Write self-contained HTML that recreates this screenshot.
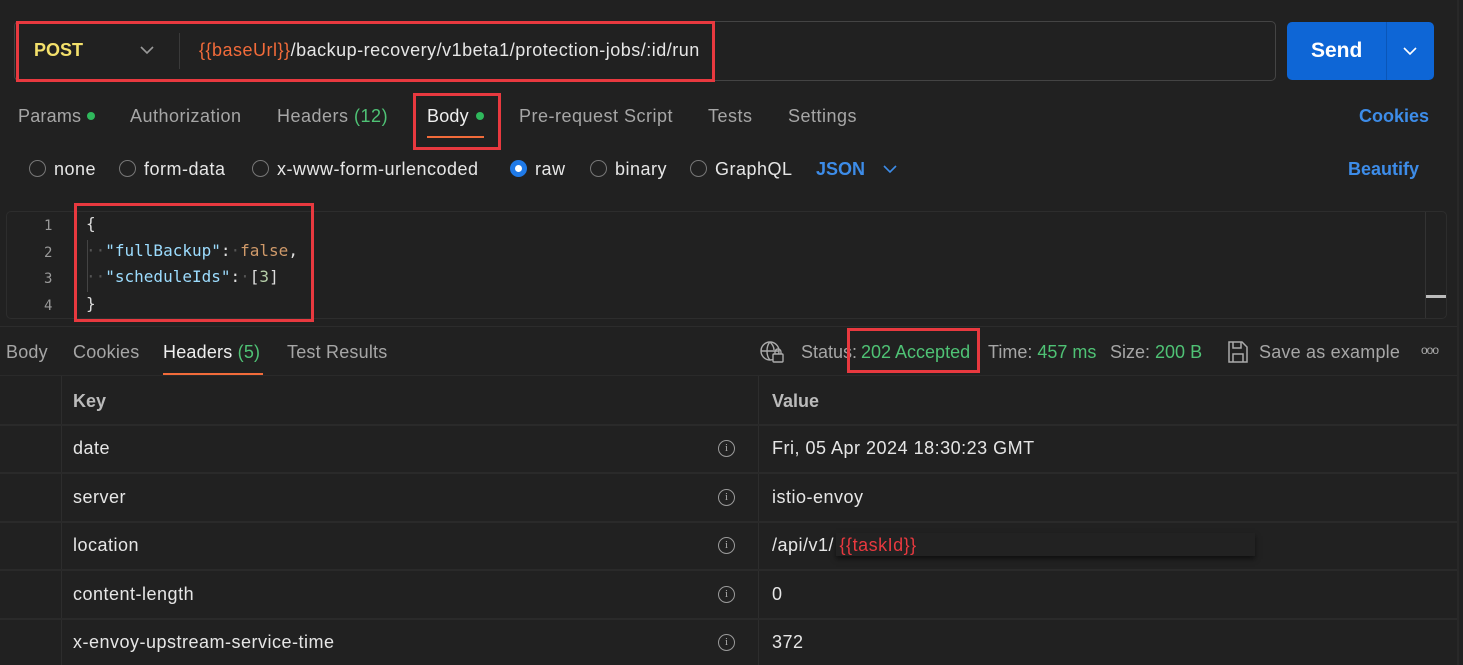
<!DOCTYPE html>
<html><head><meta charset="utf-8"><style>
*{margin:0;padding:0;box-sizing:border-box}
body{width:1463px;height:665px;background:#212121;font-family:"Liberation Sans",sans-serif;color:#e6e6e6;position:relative;overflow:hidden;font-size:18px;letter-spacing:.5px}
.a{position:absolute;white-space:nowrap}
.red{position:absolute;border:3px solid #e8393f}
.g{color:#4fc275}
.mut{color:#a6a6a6}
.radio{position:absolute;width:17px;height:17px;border:1.5px solid #777;border-radius:50%}
.hl{position:absolute;left:0;width:1457px;height:2px;background:#2a2a2a}
.info{position:absolute;left:718px;width:17px;height:17px;border:1.3px solid #9a9a9a;border-radius:50%;font-size:11px;color:#aaa;text-align:center;line-height:15px;font-family:"Liberation Serif",serif;letter-spacing:0}
.mono{font-family:"DejaVu Sans Mono","Liberation Mono",monospace;font-size:16px;letter-spacing:0}
</style></head><body>
<div class="a" style="left:14px;top:21px;width:1262px;height:60px;border:1px solid #444;border-radius:5px"></div>
<div class="a" style="left:179px;top:33px;width:1px;height:36px;background:#3a3a3a"></div>
<div class="a" style="left:34px;top:40px;font-weight:bold;color:#f3e06b;font-size:18px;letter-spacing:0">POST</div>
<svg class="a" style="left:140px;top:45px" width="14" height="10"><path d="M1 2 L7 8 L13 2" stroke="#999" stroke-width="1.6" fill="none"/></svg>
<div class="a" style="left:199px;top:40px"><span style="color:#f26b3a">{{baseUrl}}</span>/backup-recovery/v1beta1/protection-jobs/:id/run</div>
<div class="red" style="left:16px;top:21px;width:699px;height:61px"></div>
<div class="a" style="left:1287px;top:22px;width:147px;height:58px;background:#0e66d6;border-radius:5px"></div>
<div class="a" style="left:1386px;top:22px;width:1px;height:58px;background:#0a56b8"></div>
<div class="a" style="left:1311px;top:39px;font-weight:bold;font-size:21px;color:#fff;letter-spacing:0">Send</div>
<svg class="a" style="left:1403px;top:46px" width="14" height="10"><path d="M1 2 L7 8 L13 2" stroke="#fff" stroke-width="1.6" fill="none"/></svg>
<div class="a mut" style="left:18px;top:106px;letter-spacing:.2px">Params</div>
<div class="a" style="left:87px;top:112px;width:8px;height:8px;border-radius:50%;background:#2fb85c"></div>
<div class="a mut" style="left:130px;top:106px">Authorization</div>
<div class="a mut" style="left:277px;top:106px">Headers <span class="g">(12)</span></div>
<div class="a" style="left:427px;top:106px;color:#eee;letter-spacing:.2px">Body</div>
<div class="a" style="left:476px;top:112px;width:8px;height:8px;border-radius:50%;background:#2fb85c"></div>
<div class="a" style="left:427px;top:136px;width:57px;height:2px;background:#f26b3a"></div>
<div class="red" style="left:413px;top:93px;width:88px;height:57px"></div>
<div class="a mut" style="left:519px;top:106px">Pre-request Script</div>
<div class="a mut" style="left:708px;top:106px">Tests</div>
<div class="a mut" style="left:788px;top:106px">Settings</div>
<div class="a" style="left:1359px;top:106px;color:#3d8ce8;font-weight:bold;letter-spacing:0">Cookies</div>
<div class="radio" style="left:29px;top:160px"></div><div class="a" style="left:54px;top:159px">none</div>
<div class="radio" style="left:119px;top:160px"></div><div class="a" style="left:144px;top:159px">form-data</div>
<div class="radio" style="left:252px;top:160px"></div><div class="a" style="left:277px;top:159px">x-www-form-urlencoded</div>
<div class="radio" style="left:510px;top:160px;border:5px solid #1f7ae8;background:#fff"></div><div class="a" style="left:535px;top:159px">raw</div>
<div class="radio" style="left:590px;top:160px"></div><div class="a" style="left:615px;top:159px">binary</div>
<div class="radio" style="left:690px;top:160px"></div><div class="a" style="left:715px;top:159px">GraphQL</div>
<div class="a" style="left:816px;top:159px;color:#3d8ce8;font-weight:bold;letter-spacing:0">JSON</div>
<svg class="a" style="left:883px;top:164px" width="14" height="10"><path d="M1 2 L7 8 L13 2" stroke="#3d8ce8" stroke-width="1.6" fill="none"/></svg>
<div class="a" style="left:1348px;top:159px;color:#3d8ce8;font-weight:bold;letter-spacing:0">Beautify</div>
<div class="a" style="left:6px;top:211px;width:1441px;height:108px;border:1px solid #2d2d2d;border-radius:5px"></div>
<div class="a" style="left:1425px;top:212px;width:1px;height:106px;background:#333"></div>
<div class="a" style="left:1426px;top:295px;width:20px;height:3px;background:#bbb"></div>
<div class="a mono" style="left:44px;top:213px;color:#999;line-height:26.5px;font-size:14px">1<br>2<br>3<br>4</div>
<div class="a" style="left:87px;top:240px;width:1px;height:52px;background:#444"></div>
<div class="a mono" style="left:86px;top:211px;line-height:26.5px;color:#ddd">{<br><span style="color:#555">··</span><span style="color:#9cdcfe">"fullBackup"</span>:<span style="color:#555">·</span><span style="color:#d09a6a">false</span>,<br><span style="color:#555">··</span><span style="color:#9cdcfe">"scheduleIds"</span>:<span style="color:#555">·</span>[<span style="color:#b5cea8">3</span>]<br>}</div>
<div class="red" style="left:74px;top:203px;width:240px;height:119px"></div>
<div class="hl" style="top:326px;height:1px;background:#2c2c2c"></div>
<div class="a mut" style="left:6px;top:342px;letter-spacing:.2px">Body</div>
<div class="a mut" style="left:73px;top:342px;letter-spacing:.2px">Cookies</div>
<div class="a" style="left:163px;top:342px;color:#eee;letter-spacing:.2px">Headers <span class="g">(5)</span></div>
<div class="a" style="left:163px;top:373px;width:100px;height:2px;background:#f26b3a"></div>
<div class="a mut" style="left:287px;top:342px;letter-spacing:.2px">Test Results</div>
<svg class="a" style="left:760px;top:340px" width="26" height="24" fill="none" stroke="#aaa" stroke-width="1.4"><circle cx="10" cy="11" r="9"/><path d="M1 11h18M10 2c-4 4-4 14 0 18M10 2c3 3 4 6 4 8"/><rect x="13" y="14" width="10" height="8" rx="1" fill="#212121"/><path d="M15 14v-2a3 3 0 016 0v2"/></svg>
<div class="a mut" style="left:801px;top:342px;letter-spacing:0">Status:</div>
<div class="a g" style="left:861px;top:342px;letter-spacing:0">202 Accepted</div>
<div class="red" style="left:847px;top:328px;width:133px;height:45px"></div>
<div class="a mut" style="left:988px;top:342px;letter-spacing:0">Time: <span class="g">457 ms</span></div>
<div class="a mut" style="left:1110px;top:342px;letter-spacing:0">Size: <span class="g">200 B</span></div>
<svg class="a" style="left:1227px;top:340px" width="22" height="24" fill="none" stroke="#aaa" stroke-width="1.5"><path d="M2 2h13l5 5v15H2z"/><path d="M6 2v6h8V2M6 22v-8h10v8"/></svg>
<div class="a mut" style="left:1259px;top:342px;letter-spacing:.2px">Save as example</div>
<div class="a" style="left:1421px;top:343px;color:#aaa;font-size:12px;letter-spacing:-1px">ooo</div>
<div class="hl" style="top:375px;height:1px"></div>
<div class="a" style="left:1457px;top:0;width:2px;height:665px;background:#282828"></div>
<div class="a" style="left:61px;top:376px;width:1px;height:289px;background:#2d2d2d"></div>
<div class="a" style="left:758px;top:376px;width:1px;height:289px;background:#2d2d2d"></div>
<div class="a mut" style="left:73px;top:391px;font-weight:bold;color:#bbb;letter-spacing:0">Key</div>
<div class="a" style="left:772px;top:391px;font-weight:bold;color:#bbb;letter-spacing:0">Value</div>
<div class="hl" style="top:424px"></div>
<div class="hl" style="top:472px"></div>
<div class="hl" style="top:521px"></div>
<div class="hl" style="top:569px"></div>
<div class="hl" style="top:618px"></div>
<div class="a" style="left:73px;top:438px">date</div><div class="info" style="top:440px">i</div><div class="a" style="left:772px;top:438px">Fri, 05 Apr 2024 18:30:23 GMT</div>
<div class="a" style="left:73px;top:487px">server</div><div class="info" style="top:489px">i</div><div class="a" style="left:772px;top:487px">istio-envoy</div>
<div class="a" style="left:73px;top:535px">location</div><div class="info" style="top:537px">i</div>
<div class="a" style="left:836px;top:533px;width:419px;height:23px;background:#222;box-shadow:0 3px 5px rgba(0,0,0,.5)"></div>
<div class="a" style="left:772px;top:535px">/api/v1/ <span style="color:#e8393f">{{taskId}}</span></div>
<div class="a" style="left:73px;top:584px">content-length</div><div class="info" style="top:586px">i</div><div class="a" style="left:772px;top:584px">0</div>
<div class="a" style="left:73px;top:632px">x-envoy-upstream-service-time</div><div class="info" style="top:634px">i</div><div class="a" style="left:772px;top:632px">372</div>
</body></html>
